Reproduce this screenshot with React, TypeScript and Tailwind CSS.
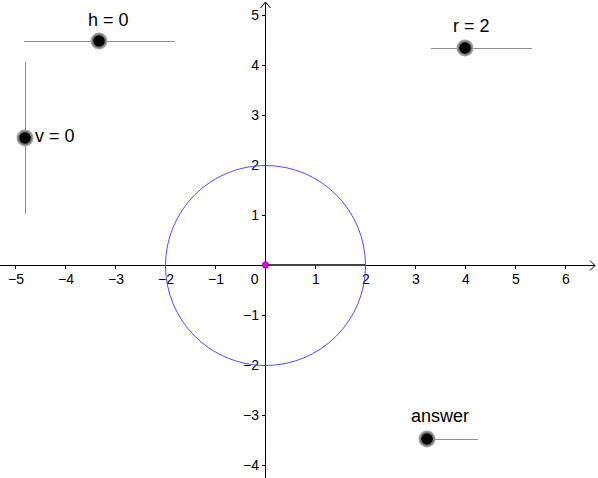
import React from "react";

const O = 265;
const U = 50;

function SliderPoint({ cx, cy }: { cx: number; cy: number }) {
  return (
    <g>
      <circle cx={cx} cy={cy} r={8.5} fill="#a0a0a0" />
      <circle cx={cx} cy={cy} r={7.2} fill="#7a7a7a" />
      <circle cx={cx} cy={cy} r={5.8} fill="#000" />
    </g>
  );
}

export default function App() {
  const xs = [-5, -4, -3, -2, -1, 1, 2, 3, 4, 5, 6];
  const ys = [5, 4, 3, 2, 1, -1, -2, -3, -4];
  const lab = (n: number) => (n < 0 ? "\u2212" + Math.abs(n) : String(n));
  return (
    <div className="w-[598px] h-[478px] bg-white overflow-hidden font-['Liberation_Sans',Arial,sans-serif]">
      <svg width="598" height="478" viewBox="0 0 598 478" className="block">
        {/* axes */}
        <line x1={0} y1={O + 0.5} x2={595} y2={O + 0.5} stroke="#000" strokeWidth={1} />
        <line x1={O + 0.5} y1={2} x2={O + 0.5} y2={478} stroke="#000" strokeWidth={1} />
        <polyline points={`590,${O - 4.5} 595,${O + 0.5} 590,${O + 5.5}`} fill="none" stroke="#000" strokeWidth={1} />
        <polyline points={`${O - 4.5},8 ${O + 0.5},2 ${O + 5.5},8`} fill="none" stroke="#000" strokeWidth={1} />
        {xs.map((k) => (
          <g key={"x" + k}>
            <line x1={O + U * k + 0.5} y1={O} x2={O + U * k + 0.5} y2={O + 4} stroke="#000" strokeWidth={1} />
            <text x={O + U * k + 1} y={284} fontSize={14} textAnchor="middle" fill="#000">
              {lab(k)}
            </text>
          </g>
        ))}
        {ys.map((k) => (
          <g key={"y" + k}>
            <line x1={O - 3} y1={O - U * k + 0.5} x2={O} y2={O - U * k + 0.5} stroke="#000" strokeWidth={1} />
            <text x={259} y={O - U * k + 5} fontSize={14} textAnchor="end" fill="#000">
              {lab(k)}
            </text>
          </g>
        ))}
        <text x={258.5} y={284} fontSize={14} textAnchor="end" fill="#000">0</text>

        {/* circle */}
        <circle cx={O + 0.5} cy={O + 0.5} r={100} fill="none" stroke="#4f4fff" strokeWidth={1} />
        {/* segment */}
        <line x1={O} y1={O} x2={O + 100} y2={O} stroke="#444" strokeWidth={2} />
        <circle cx={O + 0.5} cy={O} r={3.2} fill="#e600e6" stroke="#5a005a" strokeWidth={0.6} />

        {/* h slider */}
        <line x1={24} y1={41.5} x2={175} y2={41.5} stroke="#8f8f8f" strokeWidth={1} />
        <SliderPoint cx={99} cy={41} />
        <text x={88} y={26} fontSize={18} fill="#000">h = 0</text>

        {/* v slider */}
        <line x1={25.5} y1={62} x2={25.5} y2={214} stroke="#8f8f8f" strokeWidth={1} />
        <SliderPoint cx={25} cy={138} />
        <text x={35} y={142} fontSize={18} fill="#000">v = 0</text>

        {/* r slider */}
        <line x1={431} y1={48.5} x2={532} y2={48.5} stroke="#8f8f8f" strokeWidth={1} />
        <SliderPoint cx={465} cy={48} />
        <text x={453} y={32} fontSize={18} fill="#000">r = 2</text>

        {/* answer slider */}
        <line x1={427} y1={439.5} x2={478} y2={439.5} stroke="#8f8f8f" strokeWidth={1} />
        <SliderPoint cx={427} cy={439} />
        <text x={411} y={422} fontSize={18} fill="#000">answer</text>
      </svg>
    </div>
  );
}
